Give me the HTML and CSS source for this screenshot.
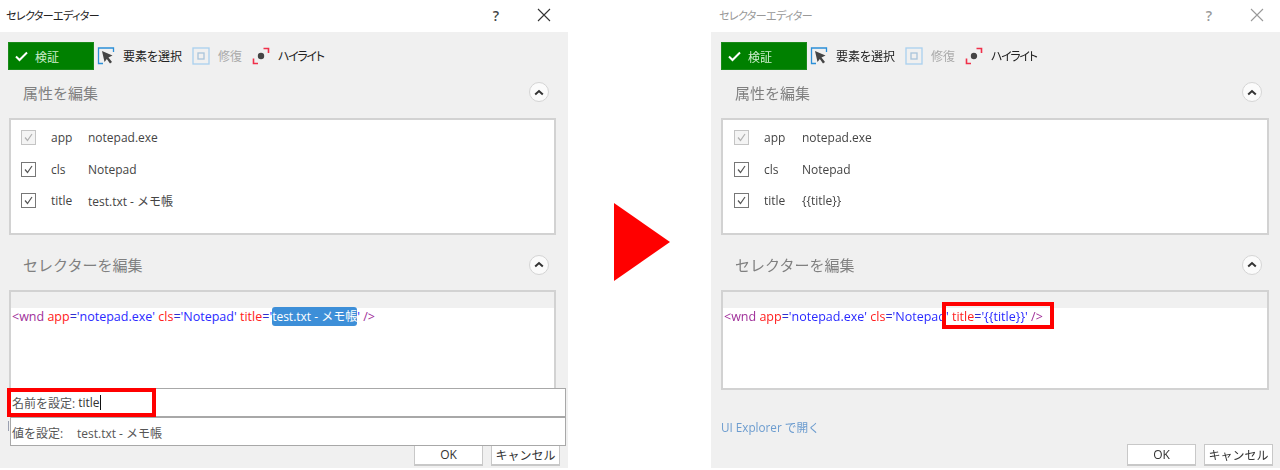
FILE: index.html
```html
<!DOCTYPE html>
<html lang="ja">
<head>
<meta charset="utf-8">
<title>セレクターエディター</title>
<link rel="stylesheet" href="styles.css">
</head>
<body>
<div class="stage">
  <section class="dialog dialog-left">
    <header class="titlebar">
      <span class="title">セレクターエディター</span>
      <span class="help">?</span>
      <svg class="close" width="14" height="14" viewBox="0 0 14 14"><path d="M1 1L13 13M13 1L1 13" stroke="#333" stroke-width="1.1" fill="none"/></svg>
    </header>
    <div class="content">
      <div class="toolbar">
        <button class="verify"><svg width="13" height="11" viewBox="0 0 13 11"><path d="M1 5.5L4.5 9L12 1.5" stroke="#fff" stroke-width="2" fill="none"/></svg><span>検証</span></button>
        <span class="tool"><svg width="18" height="18" viewBox="0 0 18 18"><path d="M6 16.5H1.5V1H16.5V5" stroke="#2b8fd8" stroke-width="1.3" fill="none"/><path d="M5 4L15.5 8.5L11.5 10.5L15 15L13 16.5L9.8 12L7.5 15Z" fill="#444"/></svg>要素を選択</span>
        <span class="tool disabled"><svg width="18" height="18" viewBox="0 0 18 18"><rect x="1" y="1" width="16" height="16" fill="none" stroke="#a9d0ee" stroke-width="1.3"/><rect x="6" y="6" width="6" height="6" fill="none" stroke="#a9c4da" stroke-width="1.3"/></svg>修復</span>
        <span class="tool tight"><svg width="18" height="18" viewBox="0 0 18 18"><path d="M11.5 1.5H16.5V6M6 16.5H1.5V11.5" stroke="#f0304a" stroke-width="1.6" fill="none"/><circle cx="9" cy="9" r="3.2" fill="#444"/></svg>ハイライト</span>
      </div>
      <div class="section-head"><h2>属性を編集</h2><span class="chev"><svg width="10" height="7" viewBox="0 0 10 7"><path d="M1.2 5.5L5 2L8.8 5.5" stroke="#333" stroke-width="2" fill="none"/></svg></span></div>
      <div class="attrs">
        <div class="attr"><span class="check off"><svg width="11" height="11" viewBox="0 0 11 11"><path d="M2 5.5L4.5 8.5L9 2" stroke="#b0b0b0" stroke-width="1.2" fill="none"/></svg></span><span class="key">app</span><span>notepad.exe</span></div>
        <div class="attr"><span class="check"><svg width="11" height="11" viewBox="0 0 11 11"><path d="M2 5.5L4.5 8.5L9 2" stroke="#555" stroke-width="1.2" fill="none"/></svg></span><span class="key">cls</span><span>Notepad</span></div>
        <div class="attr"><span class="check"><svg width="11" height="11" viewBox="0 0 11 11"><path d="M2 5.5L4.5 8.5L9 2" stroke="#555" stroke-width="1.2" fill="none"/></svg></span><span class="key">title</span><span>test.txt - メモ帳</span></div>
      </div>
      <div class="section-head second"><h2>セレクターを編集</h2><span class="chev"><svg width="10" height="7" viewBox="0 0 10 7"><path d="M1.2 5.5L5 2L8.8 5.5" stroke="#333" stroke-width="2" fill="none"/></svg></span></div>
      <div class="editor">
        <div class="band"></div>
        <div class="code"><span class="tag">&lt;wnd</span> <span class="an">app</span><span class="eq">=</span><span class="av">'notepad.exe'</span> <span class="an">cls</span><span class="eq">=</span><span class="av">'Notepad'</span> <span class="an">title</span><span class="eq">=</span><span class="av">'</span><span class="sel">test.txt - メモ帳</span><span class="av">'</span> <span class="tag">/&gt;</span></div>
      </div>
      <div class="footer"><button class="btn">OK</button><button class="btn">キャンセル</button></div>
    </div>
    <div class="suggest name-row">名前を設定:<span class="typed">title</span></div>
    <div class="suggest value-row"><span class="value-label">値を設定:</span>test.txt - メモ帳</div>
    <div class="redbox red-name"></div>
  </section>

  <svg class="arrow" width="56" height="78" viewBox="0 0 56 78"><path d="M0 0L56 39L0 78Z" fill="#ff0000"/></svg>

  <section class="dialog dialog-right">
    <header class="titlebar">
      <span class="title dim">セレクターエディター</span>
      <span class="help dim">?</span>
      <svg class="close" width="14" height="14" viewBox="0 0 14 14"><path d="M1 1L13 13M13 1L1 13" stroke="#999" stroke-width="1.1" fill="none"/></svg>
    </header>
    <div class="content">
      <div class="toolbar">
        <button class="verify"><svg width="13" height="11" viewBox="0 0 13 11"><path d="M1 5.5L4.5 9L12 1.5" stroke="#fff" stroke-width="2" fill="none"/></svg><span>検証</span></button>
        <span class="tool"><svg width="18" height="18" viewBox="0 0 18 18"><path d="M6 16.5H1.5V1H16.5V5" stroke="#2b8fd8" stroke-width="1.3" fill="none"/><path d="M5 4L15.5 8.5L11.5 10.5L15 15L13 16.5L9.8 12L7.5 15Z" fill="#444"/></svg>要素を選択</span>
        <span class="tool disabled"><svg width="18" height="18" viewBox="0 0 18 18"><rect x="1" y="1" width="16" height="16" fill="none" stroke="#a9d0ee" stroke-width="1.3"/><rect x="6" y="6" width="6" height="6" fill="none" stroke="#a9c4da" stroke-width="1.3"/></svg>修復</span>
        <span class="tool tight"><svg width="18" height="18" viewBox="0 0 18 18"><path d="M11.5 1.5H16.5V6M6 16.5H1.5V11.5" stroke="#f0304a" stroke-width="1.6" fill="none"/><circle cx="9" cy="9" r="3.2" fill="#444"/></svg>ハイライト</span>
      </div>
      <div class="section-head"><h2>属性を編集</h2><span class="chev"><svg width="10" height="7" viewBox="0 0 10 7"><path d="M1.2 5.5L5 2L8.8 5.5" stroke="#333" stroke-width="2" fill="none"/></svg></span></div>
      <div class="attrs">
        <div class="attr"><span class="check off"><svg width="11" height="11" viewBox="0 0 11 11"><path d="M2 5.5L4.5 8.5L9 2" stroke="#b0b0b0" stroke-width="1.2" fill="none"/></svg></span><span class="key">app</span><span>notepad.exe</span></div>
        <div class="attr"><span class="check"><svg width="11" height="11" viewBox="0 0 11 11"><path d="M2 5.5L4.5 8.5L9 2" stroke="#555" stroke-width="1.2" fill="none"/></svg></span><span class="key">cls</span><span>Notepad</span></div>
        <div class="attr"><span class="check"><svg width="11" height="11" viewBox="0 0 11 11"><path d="M2 5.5L4.5 8.5L9 2" stroke="#555" stroke-width="1.2" fill="none"/></svg></span><span class="key">title</span><span>{{title}}</span></div>
      </div>
      <div class="section-head second"><h2>セレクターを編集</h2><span class="chev"><svg width="10" height="7" viewBox="0 0 10 7"><path d="M1.2 5.5L5 2L8.8 5.5" stroke="#333" stroke-width="2" fill="none"/></svg></span></div>
      <div class="editor">
        <div class="band"></div>
        <div class="code"><span class="tag">&lt;wnd</span> <span class="an">app</span><span class="eq">=</span><span class="av">'notepad.exe'</span> <span class="an">cls</span><span class="eq">=</span><span class="av">'Notepad'</span> <span class="an">title</span><span class="eq">=</span><span class="av">'{{title}}'</span> <span class="tag">/&gt;</span></div>
      </div>
      <a class="explorer">UI Explorer で開く</a>
      <div class="footer"><button class="btn">OK</button><button class="btn">キャンセル</button></div>
    </div>
    <div class="redbox red-code"></div>
  </section>
</div>
</body>
</html>
```
FILE: styles.css
```css
* { box-sizing: border-box; }
html, body { margin: 0; height: 470px; overflow: hidden; background: #fff; }
body { font-family: "Open Sans", "Noto Sans CJK JP", sans-serif; font-size: 12px; color: #333; }
.stage { display: flex; align-items: flex-start; width: 1280px; height: 470px; filter: blur(0.35px); }
.dialog { position: relative; height: 468px; display: flex; flex-direction: column; flex: none; }
.dialog-left { width: 568px; }
.dialog-right { width: 569px; }
.arrow { flex: none; margin: 203px 41px 0 46px; }
.titlebar { height: 32px; background: #fff; display: flex; align-items: center; padding: 0 0 2px 6px; flex: none; }
.dialog-right .titlebar { padding-left: 8px; }
.title { font-size: 11px; color: #222; flex: 1; font-feature-settings: "palt"; letter-spacing: -0.6px; }
.help { font: 600 14px "Open Sans", sans-serif; color: #444; margin-right: 38px; }
.close { margin-right: 17px; }
.dialog-right .close { margin-right: 16px; }
.dim { color: #999; }
.content { flex: 1; background: #f0f0f0; padding: 10px 12px 0 8px; display: flex; flex-direction: column; }
.dialog-right .content { padding: 10px 11px 0 10px; }
.toolbar { display: flex; align-items: center; height: 28px; }
.verify { width: 86px; height: 28px; background: #008000; border: 1px solid #1a8a1a; display: flex; align-items: center; gap: 7px; padding: 0 0 0 6px; color: #cdeccd; font: 12px "Noto Sans CJK JP", sans-serif; margin-right: 3px; }
.tool { display: flex; align-items: center; gap: 8px; color: #222; font-size: 12px; margin-right: 10px; font-feature-settings: "palt"; }
.tool.disabled { color: #aaa; }
.tool.tight { letter-spacing: -1.3px; }
.section-head { display: flex; justify-content: space-between; align-items: center; height: 48px; padding: 0 7px 4px 15px; }
.dialog-right .section-head { padding-left: 14px; }
.section-head h2 { margin: 0; font: 400 15px "Noto Sans CJK JP", sans-serif; color: #808080; }
.section-head.second { height: 55px; padding-top: 4px; padding-bottom: 0; }
.chev { width: 20px; height: 20px; border-radius: 50%; background: #fbfbfb; border: 1px solid #d4d4d4; display: flex; align-items: center; justify-content: center; }
.attrs { margin-left: 1px; width: 547px; height: 117px; background: #fff; border: 2px solid #d2d2d2; padding: 2px 0 0 10px; }
.dialog-right .attrs { margin-left: 0; width: 548px; padding-left: 11px; }
.attr { display: flex; align-items: center; height: 31.5px; color: #444; }
.check { width: 15px; height: 15px; border: 1px solid #777; display: flex; align-items: center; justify-content: center; margin-right: 15px; background: #fff; }
.check.off { border-color: #c4c4c4; background: #f4f4f4; }
.key { width: 37px; }
.dialog-right .key { width: 38px; }
.editor { margin-left: 1px; width: 547px; height: 100px; background: #fff; border: 2px solid #d2d2d2; flex: none; }
.dialog-right .editor { margin-left: 0; width: 548px; }
.band { height: 16px; background: #f0f0f0; }
.code { padding: 0 0 0 1px; height: 20px; line-height: 18px; font-size: 12.5px; white-space: pre; }
.tag { color: #a0309a; }
.an { color: #ff2020; }
.eq { color: #3030d0; }
.av { color: #2a2aff; }
.sel { background: #3d8fd8; color: #fff; border-radius: 3px; padding: 1px 0; font-size: 12px; }
.explorer { display: block; margin-top: 28px; height: 18px; color: #6c9ccf; font-size: 11.7px; }
.footer { margin-top: auto; display: flex; justify-content: flex-end; gap: 8px; padding-bottom: 2px; margin-right: -4px; }
.btn { width: 69px; height: 22px; background: #fff; border: 1px solid #c8c8c8; border-width: 1px 1px 2px; font: 12px "Open Sans", "Noto Sans CJK JP", sans-serif; color: #333; padding: 0; }
.suggest { position: absolute; left: 8px; width: 558px; height: 29px; background: #fff; border: 1px solid #a8a8a8; display: flex; align-items: center; padding-left: 3px; color: #555; }
.name-row { top: 388px; }
.value-row { top: 417px; left: 10px; width: 556px; padding: 2px 0 0 1px; }
.value-row::before { content: ""; position: absolute; left: -3px; top: 3px; width: 1px; height: 10px; background: #9aa0b0; }
.typed { color: #333; border-right: 1px solid #111; height: 15px; line-height: 15px; margin-left: 3px; }
.value-label { width: 65px; }
.redbox { position: absolute; border: 4px solid #ff0000; }
.red-name { left: 7px; top: 388px; width: 149px; height: 29px; }
.red-code { left: 231px; top: 302px; width: 112px; height: 27px; }
```
